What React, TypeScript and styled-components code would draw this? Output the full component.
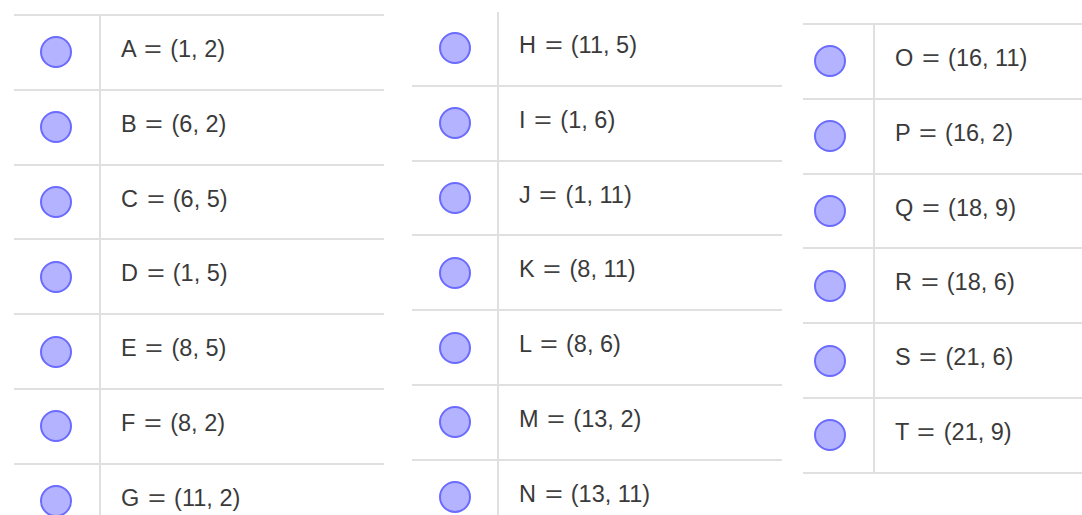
import React from "react";
import styled, { createGlobalStyle } from "styled-components";

const Global = createGlobalStyle`
  html, body {
    margin: 0;
    padding: 0;
    background: #ffffff;
    overflow: hidden;
  }
  body {
    width: 1082px;
    height: 515px;
  }
`;

const Page = styled.div`
  display: flex;
  align-items: flex-start;
  padding-left: 14px;
  width: 1200px;
`;

const Column = styled.div<{ $top: number; $gap: number; $topBorder: boolean }>`
  flex: 0 0 370px;
  width: 370px;
  margin-top: ${(p) => p.$top}px;
  margin-right: ${(p) => p.$gap}px;
  display: flex;
  flex-direction: column;
  border-top: ${(p) => (p.$topBorder ? "2px solid #e0e0e0" : "none")};
`;

const Row = styled.div<{ $iconWidth: number }>`
  display: grid;
  grid-template-columns: ${(p) => p.$iconWidth}px 1fr;
  height: 74.8px;
  box-sizing: border-box;
  border-bottom: 2px solid #e0e0e0;
`;

const IconCell = styled.div<{ $pad: number }>`
  display: flex;
  align-items: center;
  padding-left: ${(p) => p.$pad}px;
`;

const Marble = styled.span`
  display: block;
  width: 32px;
  height: 32px;
  box-sizing: border-box;
  border-radius: 50%;
  background: #b3b3ff;
  border: 2px solid #6b6bff;
`;

const TextCell = styled.div`
  border-left: 2px solid #e0e0e0;
  padding: 19px 0 0 20px;
  font-family: "Liberation Sans", Arial, sans-serif;
  font-size: 23.5px;
  line-height: 28px;
  color: #3a3a3a;
  white-space: nowrap;
`;

const Eq = styled.span`
  display: inline-block;
  margin: 0 4px;
  transform: scaleX(1.3);
  color: #444444;
`;

type Pt = [string, number, number];

const columns: {
  top: number;
  gap: number;
  topBorder: boolean;
  iconWidth: number;
  pad: number;
  pts: Pt[];
}[] = [
  {
    top: 14,
    gap: 28,
    topBorder: true,
    iconWidth: 85,
    pad: 26,
    pts: [
      ["A", 1, 2],
      ["B", 6, 2],
      ["C", 6, 5],
      ["D", 1, 5],
      ["E", 8, 5],
      ["F", 8, 2],
      ["G", 11, 2],
    ],
  },
  {
    top: 12,
    gap: 21,
    topBorder: false,
    iconWidth: 85,
    pad: 27,
    pts: [
      ["H", 11, 5],
      ["I", 1, 6],
      ["J", 1, 11],
      ["K", 8, 11],
      ["L", 8, 6],
      ["M", 13, 2],
      ["N", 13, 11],
    ],
  },
  {
    top: 23,
    gap: 0,
    topBorder: true,
    iconWidth: 70,
    pad: 11,
    pts: [
      ["O", 16, 11],
      ["P", 16, 2],
      ["Q", 18, 9],
      ["R", 18, 6],
      ["S", 21, 6],
      ["T", 21, 9],
    ],
  },
];

export default function App() {
  return (
    <>
      <Global />
      <Page>
        {columns.map((c, i) => (
          <Column key={i} $top={c.top} $gap={c.gap} $topBorder={c.topBorder}>
            {c.pts.map(([n, x, y]) => (
              <Row key={n} $iconWidth={c.iconWidth}>
                <IconCell $pad={c.pad}>
                  <Marble />
                </IconCell>
                <TextCell>
                  {n} <Eq>=</Eq> ({x}, {y})
                </TextCell>
              </Row>
            ))}
          </Column>
        ))}
      </Page>
    </>
  );
}
